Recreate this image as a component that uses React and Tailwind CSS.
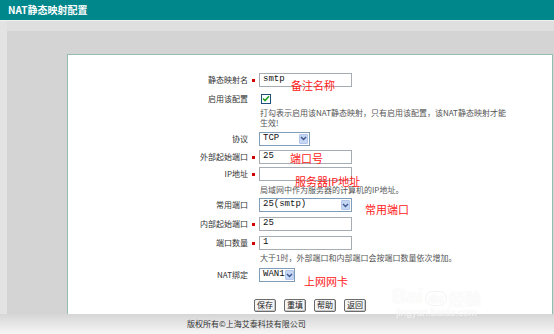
import React from "react";

const CJK = "font-['Noto_Sans_CJK_SC','Noto_Sans',sans-serif]";
const MONO = "font-['Liberation_Mono','Noto_Sans_CJK_SC',monospace]";

function Star() {
  return (
    <div className="w-[11px] flex justify-center">
      <span className="block w-[3px] h-[3px] bg-[#d40000]" />
    </div>
  );
}

function NoStar() {
  return <div className="w-[11px]" />;
}

function Label({ children }) {
  return <div className="w-[180px] text-right text-[8px] text-[#333] leading-none">{children}</div>;
}

function Input({ value }) {
  return (
    <div className={`w-[93px] h-[14px] border border-[#a5acb2] bg-white flex items-center px-[3px] text-[9px] text-[#111] ${MONO}`}>
      {value}
    </div>
  );
}

function Arrow() {
  return (
    <div className="w-[9px] h-[10px] bg-[#c6d6f5] border border-[#b4c6ea] rounded-[1px] flex items-center justify-center">
      <svg width="7" height="5" viewBox="0 0 7 5">
        <path d="M1 1 L3.5 3.5 L6 1" stroke="#3b568c" strokeWidth="1.4" fill="none" />
      </svg>
    </div>
  );
}

function Select({ value, w }) {
  return (
    <div className={`${w} h-[14px] border border-[#7f9db9] bg-white flex items-center justify-between pl-[3px] pr-[1px] text-[9px] text-[#111] ${MONO}`}>
      <span>{value}</span>
      <Arrow />
    </div>
  );
}

function Btn({ children }) {
  return (
    <div className="w-[22px] h-[13px] border border-[#6b6b6b] rounded-[2px] bg-[#f4f4f4] flex items-center justify-center text-[8px] text-[#222] leading-none shadow-[inset_-1px_-1px_0_#c8c8c8]">
      {children}
    </div>
  );
}

function Hint({ children, h }) {
  return (
    <div className={`${h} pl-[192px] flex items-center text-[8px] text-[#555] leading-[10px] whitespace-nowrap`}>
      <div>{children}</div>
    </div>
  );
}

function Note({ children, cls }) {
  return (
    <div className={`absolute text-[11px] leading-none text-[#ff2020] whitespace-nowrap ${CJK} ${cls}`}>{children}</div>
  );
}

export default function App() {
  return (
    <div className={`relative w-[554px] h-[334px] overflow-hidden bg-[#d4d4d4] flex flex-col ${CJK}`}>
      <div className="h-[20px] bg-[#00878b] flex items-center pl-[8px] text-white font-bold text-[10px] leading-none">
        NAT静态映射配置
      </div>
      <div className="h-[1px] bg-[#eef2f1]" />
      <div className="flex-1 flex">
        <div className="w-[7px] bg-[#e3e3e3]" />
        <div className="flex-1 flex flex-col">
          <div className="h-[10px] bg-[#dfdfdf]" />
          <div className="flex-1 pt-[23px] pl-[60px] pr-[1px]">
            <div className="h-[260px] bg-white border-l border-t border-r border-[#94bdb2] pt-[16px] flex flex-col">
              <div className="h-[18px] flex items-center">
                <Label>静态映射名</Label>
                <Star />
                <Input value="smtp" />
              </div>
              <div className="h-[19px] flex items-center">
                <Label>启用该配置</Label>
                <NoStar />
                <div className="ml-[2px] w-[10px] h-[10px] border border-[#1c5180] bg-white flex items-center justify-center">
                  <svg width="8" height="7" viewBox="0 0 8 7">
                    <path d="M1 3.5 L3 5.5 L7 1.2" stroke="#21a121" strokeWidth="1.6" fill="none" />
                  </svg>
                </div>
              </div>
              <Hint h="h-[20px]">
                打勾表示启用该NAT静态映射，只有启用该配置，该NAT静态映射才能
                <br />
                生效!
              </Hint>
              <div className="h-[21px] flex items-center">
                <Label>协议</Label>
                <NoStar />
                <Select value="TCP" w="w-[51px]" />
              </div>
              <div className="h-[16px] flex items-center">
                <Label>外部起始端口</Label>
                <Star />
                <Input value="25" />
              </div>
              <div className="h-[18px] flex items-center">
                <Label>IP地址</Label>
                <Star />
                <Input value="" />
              </div>
              <Hint h="h-[14px]">局域网中作为服务器的计算机的IP地址。</Hint>
              <div className="h-[16px] flex items-center">
                <Label>常用端口</Label>
                <NoStar />
                <Select value="25(smtp)" w="w-[93px]" />
              </div>
              <div className="h-[22px] flex items-center">
                <Label>内部起始端口</Label>
                <Star />
                <Input value="25" />
              </div>
              <div className="h-[16px] flex items-center">
                <Label>端口数量</Label>
                <Star />
                <Input value="1" />
              </div>
              <Hint h="h-[14px]">大于1时，外部端口和内部端口会按端口数量依次增加。</Hint>
              <div className="h-[20px] flex items-center">
                <Label>NAT绑定</Label>
                <NoStar />
                <Select value="WAN1" w="w-[36px]" />
              </div>
              <div className="mt-[12px] h-[16px] flex items-center justify-center gap-[8px]">
                <Btn>保存</Btn>
                <Btn>重填</Btn>
                <Btn>帮助</Btn>
                <Btn>返回</Btn>
              </div>
            </div>
          </div>
        </div>
      </div>
      <div className="h-[20px] bg-gradient-to-b from-[#d6d6d6] to-[#f6f6f6] flex items-center pl-[187px] text-[8px] text-[#333] leading-none">
        版权所有©上海艾泰科技有限公司
      </div>

      <Note cls="left-[291px] top-[80px]">备注名称</Note>
      <Note cls="left-[290px] top-[153px]">端口号</Note>
      <Note cls="left-[295px] top-[176px]">服务器IP地址</Note>
      <Note cls="left-[365px] top-[204px]">常用端口</Note>
      <Note cls="left-[304px] top-[276px]">上网网卡</Note>

      <div className="absolute left-[392px] top-[286px] flex flex-col items-center font-['Liberation_Sans',sans-serif] text-white/90 [text-shadow:0_0_1px_#e2e2e2] leading-none opacity-70">
        <div className="flex items-end gap-[2px] text-[20px] font-bold">
          <span>Bai</span>
          <span className="text-[13px] rounded-full border border-[#eeeeee] px-[2px]">du</span>
          <span className={`text-[16px] ${CJK}`}>经验</span>
        </div>
        <div className="text-[10px] mt-[2px]">jingyan.baidu.com</div>
      </div>
    </div>
  );
}
